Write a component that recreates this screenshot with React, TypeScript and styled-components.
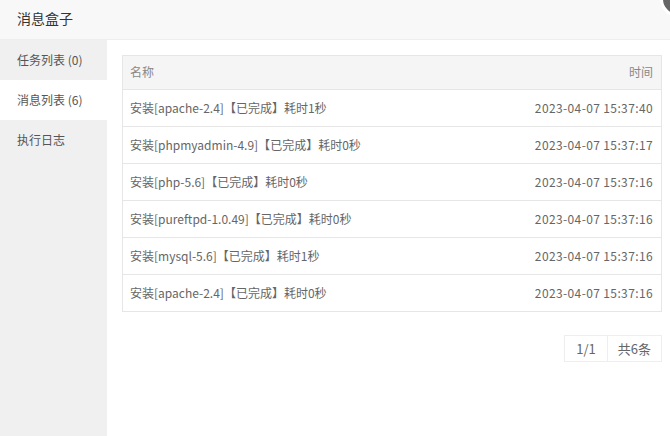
import React from "react";
import styled, { createGlobalStyle } from "styled-components";

const Global = createGlobalStyle`
  html, body { margin: 0; padding: 0; background: #fff; }
  body { font-family: "Noto Sans CJK SC", "Noto Sans", sans-serif; font-size: 12px; color: #666; }
  * { box-sizing: border-box; }
`;

const Layer = styled.div`
  position: relative;
  width: 670px;
  height: 436px;
  background: #fff;
  display: flex;
  flex-direction: column;
  overflow: hidden;
`;

const Title = styled.div`
  height: 40px;
  flex: none;
  padding: 0 17px 3px;
  display: flex;
  align-items: center;
  font-size: 14px;
  color: #333;
  background: #f8f8f8;
  border-bottom: 1px solid #eee;
`;

const Close = styled.div`
  position: absolute;
  right: -26px;
  top: -19px;
  width: 36px;
  height: 36px;
  border-radius: 50%;
  background: #666;
  border: 3px solid #fff;
`;

const Body = styled.div`
  flex: 1;
  display: flex;
  min-height: 0;
`;

const Side = styled.div`
  width: 107px;
  flex: none;
  background: #f0f0f0;
  display: flex;
  flex-direction: column;
`;

const Tab = styled.div<{ $active?: boolean }>`
  height: 40px;
  padding: 0 0 2px 17px;
  display: flex;
  align-items: center;
  color: #555;
  background: ${(p) => (p.$active ? "#fff" : "transparent")};
`;

const Main = styled.div`
  flex: 1;
  padding: 15px 8px 0 15px;
  display: flex;
  flex-direction: column;
`;

const Table = styled.div`
  border: 1px solid #e6e6e6;
  display: flex;
  flex-direction: column;
`;

const Row = styled.div<{ $head?: boolean }>`
  height: ${(p) => (p.$head ? "33px" : "37px")};
  display: flex;
  align-items: center;
  justify-content: space-between;
  padding: 0 8px 2px 7px;
  background: ${(p) => (p.$head ? "#f5f5f5" : "#fff")};
  border-top: ${(p) => (p.$head ? "none" : "1px solid #e6e6e6")};
  color: ${(p) => (p.$head ? "#888" : "#666")};
`;

const Time = styled.span`
  letter-spacing: 0.38px;
`;

const Pager = styled.div`
  margin-top: 23px;
  align-self: flex-end;
  display: flex;
  border: 1px solid #eee;
  height: 27px;
`;

const PageCell = styled.div<{ $first?: boolean }>`
  display: flex;
  align-items: center;
  padding: 0 ${(p) => (p.$first ? "11px" : "10px")} 1px;
  color: #666;
  border-left: ${(p) => (p.$first ? "none" : "1px solid #eee")};
  font-size: 13px;
`;

const rows = [
  ["安装[apache-2.4]【已完成】耗时1秒", "2023-04-07 15:37:40"],
  ["安装[phpmyadmin-4.9]【已完成】耗时0秒", "2023-04-07 15:37:17"],
  ["安装[php-5.6]【已完成】耗时0秒", "2023-04-07 15:37:16"],
  ["安装[pureftpd-1.0.49]【已完成】耗时0秒", "2023-04-07 15:37:16"],
  ["安装[mysql-5.6]【已完成】耗时1秒", "2023-04-07 15:37:16"],
  ["安装[apache-2.4]【已完成】耗时0秒", "2023-04-07 15:37:16"],
];

export default function App() {
  return (
    <>
      <Global />
      <Layer>
        <Title>消息盒子</Title>
        <Close />
        <Body>
          <Side>
            <Tab>任务列表 (0)</Tab>
            <Tab $active>消息列表 (6)</Tab>
            <Tab>执行日志</Tab>
          </Side>
          <Main>
            <Table>
              <Row $head>
                <span>名称</span>
                <span>时间</span>
              </Row>
              {rows.map(([n, t], i) => (
                <Row key={i}>
                  <span>{n}</span>
                  <Time>{t}</Time>
                </Row>
              ))}
            </Table>
            <Pager>
              <PageCell $first>1/1</PageCell>
              <PageCell>共6条</PageCell>
            </Pager>
          </Main>
        </Body>
      </Layer>
    </>
  );
}
